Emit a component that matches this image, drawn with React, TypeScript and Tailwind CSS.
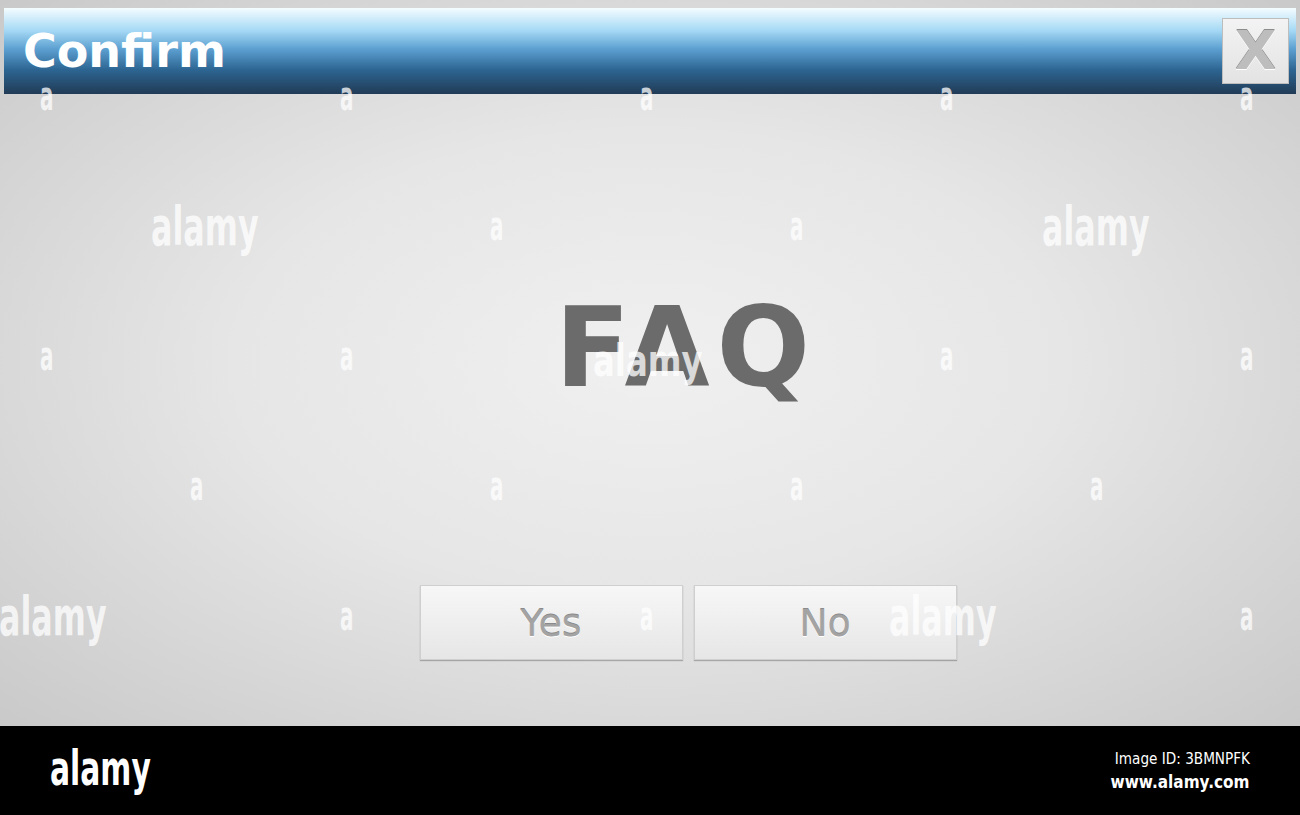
import React from "react";

const dejavu = "font-['DejaVu_Sans',Verdana,sans-serif]";

// small "a" marks and wordmarks spread over the window
const marks: { x: number; y: number; size?: "lg" | "md" }[] = [
  { x: 40, y: 84 },
  { x: 340, y: 84 },
  { x: 640, y: 84 },
  { x: 940, y: 84 },
  { x: 1240, y: 84 },
  { x: 151, y: 200, size: "lg" },
  { x: 490, y: 214 },
  { x: 790, y: 214 },
  { x: 1042, y: 200, size: "lg" },
  { x: 40, y: 344 },
  { x: 340, y: 344 },
  { x: 593, y: 338, size: "md" },
  { x: 940, y: 344 },
  { x: 1240, y: 344 },
  { x: 190, y: 474 },
  { x: 490, y: 474 },
  { x: 790, y: 474 },
  { x: 1090, y: 474 },
  { x: -1, y: 590, size: "lg" },
  { x: 340, y: 604 },
  { x: 640, y: 604 },
  { x: 889, y: 590, size: "lg" },
  { x: 1240, y: 604 },
];

const markClass = {
  lg: "text-[53px] leading-none scale-x-[0.6]",
  md: "text-[45px] leading-none scale-x-[0.72]",
  sm: "text-[40px] leading-[24px] scale-x-[0.5]",
};

const DialogButton: React.FC<{ label: string }> = ({ label }) => (
  <button
    type="button"
    className={`w-[263px] h-[75px] border border-[#cfcfcf] bg-[linear-gradient(to_bottom,#f7f7f7,#e6e6e6)] shadow-[0_1px_1px_rgba(0,0,0,0.25)] text-[38px] leading-none text-[#a3a3a3] [text-shadow:0_1px_0_#ffffff,0_-1px_0_#8a8a8a] ${dejavu}`}
  >
    {label}
  </button>
);

export default function App() {
  return (
    <div className="w-[1300px] h-[815px] flex flex-col overflow-hidden">
      <div className="relative h-[726px] flex flex-col pt-2 px-1 bg-[radial-gradient(ellipse_at_center,#f0f0f0_0%,#e6e6e6_45%,#c9c9c9_100%)]">
        <div className="h-[86px] flex items-center justify-between pl-[19px] pr-[7px] bg-[linear-gradient(to_bottom,#f4fdff_0%,#a6d9f5_26%,#5b9fd0_48%,#2d6592_72%,#213b56_100%)]">
          <span className={`text-[46px] font-bold text-white leading-none ${dejavu}`}>
            Confirm
          </span>
          <button
            type="button"
            className={`w-[67px] h-[66px] flex items-center justify-center border border-[#bdbdbd] bg-[linear-gradient(to_bottom,#f3f3f3,#e3e3e3)] text-[54px] font-bold leading-none text-[#bdbdbd] [text-shadow:0_1px_0_#ffffff,0_-1px_0_#8c8c8c] ${dejavu}`}
          >
            X
          </button>
        </div>

        <div className="flex-1 flex flex-col items-center pt-[199px]">
          <div className={`ml-[72px] h-[110px] text-[110px] font-bold leading-none tracking-[7px] text-[#6b6b6b] ${dejavu}`}>
            FAQ
          </div>
          <div className="ml-[76px] mt-[182px] flex gap-[11px]">
            <DialogButton label="Yes" />
            <DialogButton label="No" />
          </div>
        </div>

        <div className="pointer-events-none absolute inset-0">
          {marks.map((m, i) => (
            <span
              key={i}
              className={`absolute origin-left font-bold text-white/75 ${dejavu} ${markClass[m.size ?? "sm"]}`}
              style={{ left: m.x, top: m.y }}
            >
              {m.size ? "alamy" : "a"}
            </span>
          ))}
        </div>
      </div>

      <div className={`flex-1 bg-black flex items-center justify-between pl-[50px] pr-[50px] ${dejavu}`}>
        <span className="inline-block origin-left scale-x-[0.62] text-[48px] font-bold leading-none text-white -mt-[6px]">
          alamy
        </span>
        <div className="flex flex-col items-end gap-[6px] text-white">
          <span className="inline-block origin-right scale-x-[0.85] text-[16px] leading-none">
            Image ID: 3BMNPFK
          </span>
          <span className="inline-block origin-right scale-x-[0.85] text-[18px] font-bold leading-none">
            www.alamy.com
          </span>
        </div>
      </div>
    </div>
  );
}
